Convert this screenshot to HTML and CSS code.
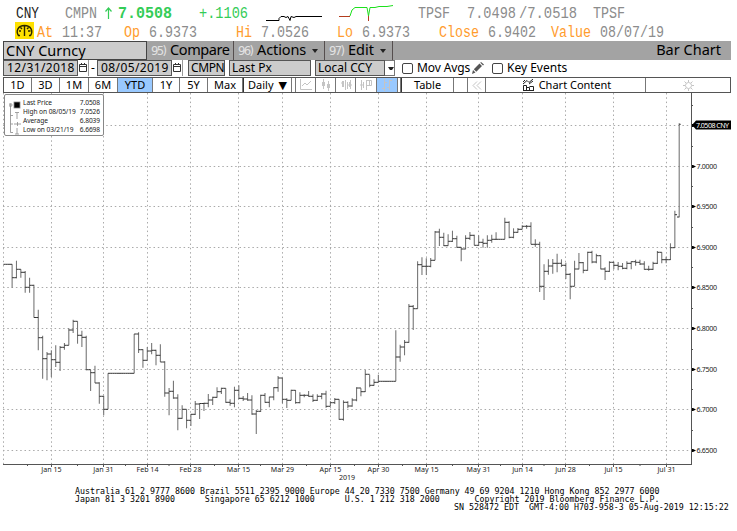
FILE: index.html
```html
<!DOCTYPE html>
<html lang="en">
<head>
    <meta charset="UTF-8">
    <title>CNY Curncy - Bar Chart</title>
    <link rel="stylesheet" href="styles.css">
</head>
<body>
    <svg class="quote" width="737" height="41">
        <g class="mono">
            <text x="16" y="18" class="black" textLength="23" lengthAdjust="spacingAndGlyphs">CNY</text>
            <text x="65" y="18" textLength="32" lengthAdjust="spacingAndGlyphs">CMPN</text>
            <text x="118" y="18" class="green bold" textLength="54" lengthAdjust="spacingAndGlyphs">7.0508</text>
            <text x="199" y="18" class="green" textLength="49" lengthAdjust="spacingAndGlyphs">+.1106</text>
            <text x="418" y="18" textLength="32" lengthAdjust="spacingAndGlyphs">TPSF</text>
            <text x="467" y="18" textLength="49" lengthAdjust="spacingAndGlyphs">7.0498</text>
            <text x="519" y="18" textLength="58" lengthAdjust="spacingAndGlyphs">/7.0518</text>
            <text x="593" y="18" textLength="32" lengthAdjust="spacingAndGlyphs">TPSF</text>
            <text x="37" y="37" class="orange" textLength="16" lengthAdjust="spacingAndGlyphs">At</text>
            <text x="62" y="37" textLength="40" lengthAdjust="spacingAndGlyphs">11:37</text>
            <text x="124" y="37" class="orange" textLength="16" lengthAdjust="spacingAndGlyphs">Op</text>
            <text x="149" y="37" textLength="48" lengthAdjust="spacingAndGlyphs">6.9373</text>
            <text x="236" y="37" class="orange" textLength="16" lengthAdjust="spacingAndGlyphs">Hi</text>
            <text x="261" y="37" textLength="48" lengthAdjust="spacingAndGlyphs">7.0526</text>
            <text x="337" y="37" class="orange" textLength="16" lengthAdjust="spacingAndGlyphs">Lo</text>
            <text x="362" y="37" textLength="48" lengthAdjust="spacingAndGlyphs">6.9373</text>
            <text x="439" y="37" class="orange" textLength="40" lengthAdjust="spacingAndGlyphs">Close</text>
            <text x="488" y="37" textLength="48" lengthAdjust="spacingAndGlyphs">6.9402</text>
            <text x="551" y="37" class="orange" textLength="40" lengthAdjust="spacingAndGlyphs">Value</text>
            <text x="600" y="37" textLength="64" lengthAdjust="spacingAndGlyphs">08/07/19</text>
        </g>
        <path class="arrow" d="M108.500 19V8M105.500 11.500L108.500 8L111.500 11.500"/>
        <rect x="15" y="22" width="19" height="17" fill="#ffe100"/>
        <path class="gauge" d="M20 35.500H18.500C15.500 31 18 25.500 24.500 25.500S33.500 31 30.500 35.500H29M24.500 36V28M24.500 26V28M19 31H21M28 31H30.500M20.500 27.500L22 29M28.500 27.500L27 29"/>
        <path class="spark" stroke="#000" d="M266 20.500H279V18.500L281 16.500H284L286 17.500L288 16.500L290 20.500L291 16.500L294 17.500L296 16.500H322"/>
        <path class="spark" stroke="#b33c1e" d="M339 16.500H350M368.500 16V21"/>
        <path class="spark" stroke="#1de01d" d="M350 16L352 10L355 7.500H367L368.500 16L370 7.500H375L379 6.500H387L393 5.500"/>
    </svg>

    <div class="titlebar">
        <div class="security">CNY Curncy</div>
        <div class="menu compare"><i>95)</i>Compare</div>
        <div class="menu actions"><i>96)</i>Actions <b></b></div>
        <div class="menu edit"><i>97)</i>Edit <b></b></div>
        <div class="heading">Bar Chart</div>
    </div>

    <div class="settings">
        <div class="field date1">12/31/2018</div>
        <div class="cal"><svg width="8" height="9"><path d="M.5 1.500H7.500V8.500H.5ZM.5 3.500H7.500M2.500 0V2M5.500 0V2"/></svg></div>
        <span class="dash">-</span>
        <div class="field date2">08/05/2019</div>
        <div class="cal"><svg width="8" height="9"><path d="M.5 1.500H7.500V8.500H.5ZM.5 3.500H7.500M2.500 0V2M5.500 0V2"/></svg></div>
        <div class="field source">CMPN</div>
        <div class="field price">Last Px</div>
        <div class="field ccy">Local CCY</div>
        <div class="drop"><b></b></div>
        <span class="check"></span><span class="label mov">Mov Avgs</span>
        <svg class="pencil" width="12" height="12"><path d="M0 12L1 8L3.500 10.500ZM1.800 7.200L7.500 1.500L10 4L4.300 9.700ZM8.300 .8L9 0L12 2.500L11 3.500Z"/></svg>
        <span class="check"></span><span class="label">Key Events</span>
    </div>

    <div class="toolbar">
        <div class="tab" style="width:28px">1D</div>
        <div class="tab" style="width:28px">3D</div>
        <div class="tab" style="width:29px">1M</div>
        <div class="tab" style="width:29px">6M</div>
        <div class="tab on" style="width:35px">YTD</div>
        <div class="tab" style="width:27px">1Y</div>
        <div class="tab" style="width:28px">5Y</div>
        <div class="tab" style="width:35px">Max</div>
        <div class="tab dark" style="width:49px">Daily <span class="tri">▼</span></div>
        <div class="tab" style="width:4px"></div>
        <div class="tab" style="width:20px"><svg width="14" height="12"><path d="M1.500 0V10.500H13M3 7L6 4L8 6L12 2"/></svg></div>
        <div class="tab" style="width:20px"><svg width="14" height="12"><path d="M4.500 0V10M9.500 2V12M3.500 3V7M5.500 3V7M8.500 5V9M10.500 5V9"/></svg></div>
        <div class="tab" style="width:20px"><svg width="14" height="12"><path d="M3.500 2V8M4.500 2V8M6.500 1V11M8.500 3V10M11.500 1V10M2 4H5M8 6H13M10.500 3V8"/></svg></div>
        <div class="tab" style="width:21px"><svg width="14" height="12"><path d="M2.500 1V11M4.500 3V9M7.500 1V11M8 1.500H12.500V6.500H8M10.500 2V6M1 6H5"/></svg></div>
        <div class="tab on" style="width:21px"><svg width="14" height="12"><path d="M4.500 0V12M2 9.500H4.500M4.500 3.500H7M9.500 1V11M7 8.500H9.500M9.500 1.500H12"/></svg></div>
        <div class="tab" style="width:3px"></div>
        <div class="tab dark" style="width:53px">Table</div>
        <div class="tab" style="width:14px"></div>
        <div class="tab" style="width:18px"><svg width="10" height="9"><path d="M5 .5L1 4.500L5 8.500M9 .5L5 4.500L9 8.500"/></svg></div>
        <div class="tab content"><svg class="ink" width="11" height="12"><path d="M.5 12V6.500H3.500V12M3.500 8.500H6.500V12M6.500 7.500H10.500V12M0 11.500H11M0 5L4 1.500L6 3.500L10 0M0 3L2 1M6 5L10 2"/></svg>Chart Content</div>
        <div class="tab gear"><svg width="11" height="11"><circle cx="5.500" cy="5.500" r="3"/><path d="M5.500 0V2M5.500 9V11M0 5.500H2M9 5.500H11M1.500 1.500L3 3M8 8L9.500 9.500M9.500 1.500L8 3M3 8L1.500 9.500"/></svg></div>
    </div>

    <div class="chart">
        <svg id="plot" width="737" height="392" viewBox="0 93 737 392"></svg>
        <div class="legend">
            <svg width="14" height="38"><path d="M1.500 5V33.500M1.500 16.500H4M1.500 25H4M1.500 33.500H4"/><circle cx="1.500" cy="6" r="1.500"/><rect x="5" y="3" width="6" height="6" fill="#000"/><path d="M6 13.500H10M8 14V20M5 25H12M8.500 23V27M8 29V35M6 35H10"/></svg>
            <table>
                <tr><td>Last Price</td><td>7.0508</td></tr>
                <tr><td>High on 08/05/19</td><td>7.0526</td></tr>
                <tr><td>Average</td><td>6.8039</td></tr>
                <tr><td>Low on 03/21/19</td><td>6.6698</td></tr>
            </table>
        </div>
    </div>

    <pre class="footer">Australia 61 2 9777 8600 Brazil 5511 2395 9000 Europe 44 20 7330 7500 Germany 49 69 9204 1210 Hong Kong 852 2977 6000
Japan 81 3 3201 8900      Singapore 65 6212 1000      U.S. 1 212 318 2000       Copyright 2019 Bloomberg Finance L.P.
<span>SN 528472 EDT  GMT-4:00 H703-958-3 05-Aug-2019 12:15:22</span></pre>
    <script src="chart.js"></script>
</body>
</html>
```
FILE: styles.css
```css
body {
    margin: 0;
    width: 737px;
    height: 531px;
    overflow: hidden;
    background: #fff;
    color: #000;
    font-family: "Noto Sans", sans-serif;
}
svg {
    display: block;
    fill: none;
}
.mono {
    font-family: "Liberation Mono", monospace;
    font-size: 16px;
    fill: #8c8c8c;
}
.mono .black { fill: #222; }
.mono .green { fill: #34cc57; }
.mono .bold { font-weight: bold; }
.mono .orange { fill: #ff9c2e; }
.arrow { stroke: #34cc57; stroke-width: 1.2; }
.gauge { stroke: #2a2600; stroke-width: 1.4; }

.titlebar {
    display: flex;
    box-sizing: border-box;
    margin-left: 3px;
    width: 728px;
    height: 19px;
    background: #a3a3a3;
    font: 14.5px/17px "Noto Sans", sans-serif;
}
.security {
    box-sizing: border-box;
    width: 144px;
    padding-left: 2px;
    border: 1px solid #444;
    background: #ccc;
    line-height: 16px;
}
.menu {
    box-sizing: border-box;
    border-right: 1px solid #554e4e;
    padding-left: 4px;
    white-space: nowrap;
}
.menu i {
    display: inline-block;
    width: 19px;
    font: 13px/16px "DejaVu Sans Condensed", "DejaVu Sans", sans-serif;
    letter-spacing: -1.7px;
    color: #e2e2e2;
}
.menu b, .drop b {
    display: inline-block;
    border: 3px solid transparent;
    border-top: 4px solid #222;
    border-bottom: 0;
    margin: 0 0 2px 2px;
}
.compare { width: 87px; letter-spacing: -0.4px; }
.actions { width: 91px; letter-spacing: -0.1px; }
.edit { width: 68px; }
.heading { margin-left: auto; padding-right: 10px; }

.settings {
    display: flex;
    align-items: center;
    margin-left: 3px;
    height: 16px;
    padding-bottom: 1px;
    font: 12px/14px "Noto Sans", sans-serif;
    white-space: nowrap;
}
.field {
    box-sizing: border-box;
    flex: none;
    height: 16px;
    padding-left: 2px;
    border: 1px solid #555;
    background: #ccc;
}
.date1, .date2 { width: 75px; padding-left: 3px; letter-spacing: 0.4px; }
.cal {
    box-sizing: border-box;
    width: 11px;
    padding: 3px 0 0 1px;
    height: 16px;
    border-right: 1px solid #999;
}
.cal path { stroke: #333; }
.dash { width: 8px; text-align: center; }
.source { width: 37px; margin-left: 5px; letter-spacing: -0.4px; }
.price { width: 82px; margin-left: 4px; }
.ccy { width: 70px; margin-left: 4px; }
.drop {
    box-sizing: border-box;
    width: 10px;
    height: 16px;
    border: 1px solid #777;
    border-left: 0;
}
.drop b { display: block; border-width: 3px 2px 0; margin: 6px 0 0 3px; }
.check {
    box-sizing: border-box;
    width: 11px;
    height: 11px;
    margin: 0 4px 0 7px;
    border: 1px solid #444;
    border-radius: 2px;
}
.mov { width: 54px; letter-spacing: -0.1px; }
.pencil { fill: #555; margin: 0 1px; }

.toolbar {
    display: flex;
    box-sizing: border-box;
    margin-left: 3px;
    width: 728px;
    height: 16px;
    border: 1px solid #555;
    font: 11px/14px "Noto Sans", sans-serif;
}
.tab {
    display: flex;
    box-sizing: border-box;
    flex: none;
    align-items: center;
    justify-content: center;
    border-right: 1px solid #777;
    white-space: nowrap;
}
.tab.on { background: #99c9ff; }
.tab.dark { border-left: 1px solid #333; }
.tab path, .tab circle { stroke: #c4c4c4; }
.tab .ink { margin-right: 5px; }
.tab .ink path { stroke: #222; }
.tab.content { width: 160px; padding-left: 3px; }
.tab.gear { flex: 1; border-right: 0; }
.tri { font: 11px "DejaVu Sans", sans-serif; margin-left: 5px; }

.chart {
    position: relative;
    height: 392px;
}
.legend {
    position: absolute;
    left: 4px;
    top: 1px;
    display: flex;
    box-sizing: border-box;
    width: 100px;
    height: 42px;
    padding: 4px 3px 0 4px;
    border: 1px solid #888;
    border-radius: 2px;
    background: #fff;
}
.legend svg { flex: none; stroke: #888; stroke-width: 0.8; }
.legend table {
    flex: 1;
    border-collapse: collapse;
    font-size: 6.6px;
    line-height: 8.3px;
    white-space: nowrap;
    color: #222;
}
.legend td { padding: 0; letter-spacing: -0.07px; }
.legend td + td { text-align: right; }
.grid { stroke: #aaa; stroke-dasharray: 1.5 2.8; }
.axis { stroke: #555; }
.stem { stroke: #777; stroke-width: 1.1; }
.tick { stroke: #333; stroke-width: 1; }
.scale {
    font-size: 7.1px;
    fill: #222;
}
.tag { fill: #000; }
.white { fill: #fff; }

.footer {
    margin: 2px 0 0 75px;
    width: 655px;
    font: 8.31px/8px "DejaVu Sans Mono", monospace;
}
.footer span {
    display: block;
    margin-left: 379px;
}
```
FILE: chart.js
```javascript
// one entry per weekday from 12/31/18: high, low, close (chart heights)
const bars = [
    [264.3,264.3,264.3],[264.3,264.3,264.3],[264.3,287.7,277.7],[260.7,278.3,269.3],[269.3,277.7,272.3],
    [271,292.7,287.3],[277.7,292.7,285.3],[284.7,317.5,317.5],[309.7,350.3,337.7],[335.7,378.7,358.7],
    [352,380.3,354],[350.3,377,359.7],[345.3,367,362.3],[346,371,347.3],[343,349.7,345.3],
    [328.3,345.3,330],[319.7,333,321.3],[321.3,343.7,335.3],[330.7,347,337.3],[335.7,370.3,369.7],
    [369.7,391,372.7],[365.7,383,383],[382.3,403.7,396.3],[395.7,415.3,409.3],[373.3,409.3,373.3],
    [373.3,373.3,373.3],[373.3,373.3,373.3],[373.3,373.3,373.3],[373.3,373.3,373.3],[373.3,373.3,373.3],
    [334,373.3,334],[332.3,353,349.7],[349.3,367.7,360.3],[347,360.3,351],[343,354.3,350.3],
    [349.7,365.3,355.3],[344.3,362,362],[361.3,396.7,393],[388,415.3,391.3],[380.7,398.7,398],
    [394.3,430.3,418.3],[405.3,418.7,409.3],[409.3,428.3,420.3],[414,426,414.3],[401,415,404],
    [403.3,419,403.5],[402.7,411,403.3],[394,407.3,400],[396.7,405,397.3],[387.3,397.7,391.7],
    [387.7,394,388.3],[388.3,402.7,402.3],[399.3,405.7,403.3],[386.7,407.3,390.3],[385.3,399.3,398.3],
    [396,401,399],[393,400.7,400],[395.3,414.7,414],[410,434,411.3],[394.7,412,395.3],
    [393,402.7,402.3],[396.7,407.3,397],[387.3,400.3,387.7],[376,391.7,378],[378,403.3,399.3],
    [398.3,408,400.3],[389.7,400.3,390.3],[390,403.7,402.7],[392.3,403.3,395.3],[394.3,397.3,395.3],
    [391,396.7,396.3],[394.3,402,400.3],[394.3,401,396.3],[393,399.3,394],[390.7,407.7,406.3],
    [401.3,406.3,402.7],[398,404,399.3],[399.3,419.7,419.3],[400.3,420.7,402.3],[401.3,408.3,406],
    [398.3,406.7,400],[387.3,401.3,388],[388.3,396.3,391.7],[369.7,392,374.3],[374.7,387.3,385.3],
    [379.3,385.7,382.3],[374.7,382.3,381.3],[381.3,381.3,381.3],[381.3,381.3,381.3],[381.3,381.3,381.3],
    [330.3,381.3,357],[344.7,361.7,347],[340,355.3,342.3],[304,342.7,306.3],[305,330,308.7],
    [261.3,308.7,264.7],[257.3,275,266.3],[258.3,275,266.3],[258,267.3,260.3],[231,260.3,232],
    [228.7,246,237.3],[232.7,246,245.7],[234.3,245.7,241.3],[230.7,242,238.7],[235.7,247.7,247.3],
    [247,261.3,249],[235.3,249.3,238.3],[232,240,235.3],[234.7,245.3,245.3],[235.3,246,242.3],
    [238.7,247.7,243.3],[235.3,247.7,240.3],[234.7,242.7,239.3],[232.3,239.7,239.3],[239.3,239.3,239.3],
    [217.7,239.3,222.3],[221.3,238.3,237.3],[228.3,238.3,232.3],[228,232.7,229.3],[225.3,229.3,226.3],
    [225,228.7,226.3],[222.3,244.3,244.3],[239.3,246.7,244.3],[241.7,292,286.3],[264.3,300,271.3],
    [259.3,274.7,266],[259,273.7,263.3],[253.7,272.3,263.3],[259.3,267,265.3],[262.7,279,274.3],
    [273,299.3,286.3],[260.7,286.3,269],[253,269.3,262.7],[262,273.3,270.3],[251.7,270.7,252.3],
    [250.7,263.3,262],[253.7,263.3,255.7],[255.3,269.3,269],[267.3,280,271.3],[261.3,272,262.3],
    [261.7,269.3,265.3],[262,270.3,266.3],[263,269.3,268.3],[261.3,269.3,263.3],[261.3,269.3,261.7],
    [259.7,265.7,262.3],[259.7,265,264],[261.3,269.7,269.3],[265.7,270.7,269.3],[261.7,270,263.3],
    [251,264,252.3],[252.3,263.3,259.7],[256.7,263.3,259.7],[243.3,260,247.7],[210.7,248,214.7],
    [123.3,217.3,124.3]
];
const dates = [["Jan 15", 51.5], ["Jan 31", 103.5], ["Feb 14", 147.5], ["Feb 28", 190.5], ["Mar 15", 238.5],
    ["Mar 29", 282.5], ["Apr 15", 330.5], ["Apr 30", 378.5], ["May 15", 426.5], ["May 31", 478.5],
    ["Jun 14", 522.5], ["Jun 28", 565.5], ["Jul 15", 613.5], ["Jul 31", 666.5]];
const prices = [["", 125.5], ["7.0000", 166.5], ["6.9500", 206.5], ["6.9000", 247.5], ["6.8500", 287.5],
    ["6.8000", 328.5], ["6.7500", 369.5], ["6.7000", 409.5], ["6.6500", 450.5]];

let out = "";
function line(cls, x1, y1, x2, y2) {
    out += `<path class="${cls}" d="M${x1} ${y1}L${x2} ${y2}"/>`;
}

// grid and axes
line("grid", 3.5, 93, 3.5, 464);
let last = 3.5;
dates.forEach(([name, x]) => {
    line("grid", x, 93, x, 464);
    line("axis", x, 464, x, 467);
    line("axis", (x + last) / 2, 464, (x + last) / 2, 466);
    out += `<text class="scale" x="${x}" y="472" text-anchor="middle">${name}</text>`;
    last = x;
});
prices.forEach(([name, y]) => {
    line("grid", 3, y, 691, y);
    line("axis", 691, y - 20, 693, y - 20);
    out += `<path class="tag" d="M692 ${y - 1.5}H693L696 ${y}L693 ${y + 1.5}H692Z"/>`;
    out += `<text class="scale" x="696.500" y="${y + 2.5}" textLength="20.500">${name}</text>`;
});
line("axis", 691.5, 93, 691.5, 465);
line("axis", 3, 464.5, 692, 464.5);
out += '<text class="scale" x="347" y="480" text-anchor="middle">2019</text>';

// bars
bars.forEach(([high, low, close], i) => {
    const x = 3.4 + i * 4.36;
    const open = i == bars.length - 1 ? 217 : i ? bars[i - 1][2] : close;
    if (low > high) line("stem", x, high, x, low);
    if (i) line("tick", x - 2.2, open, x, open);
    line("tick", x, close, x + (i == bars.length - 1 ? 1.5 : 2.2), close);
});

// last price marker
out += '<path class="tag" d="M692 125L696 120.500H731V129.500H696Z"/>';
out += '<text class="scale white" x="696" y="127.500" textLength="33">7.0508 CNY</text>';
document.getElementById("plot").innerHTML = out;
```
